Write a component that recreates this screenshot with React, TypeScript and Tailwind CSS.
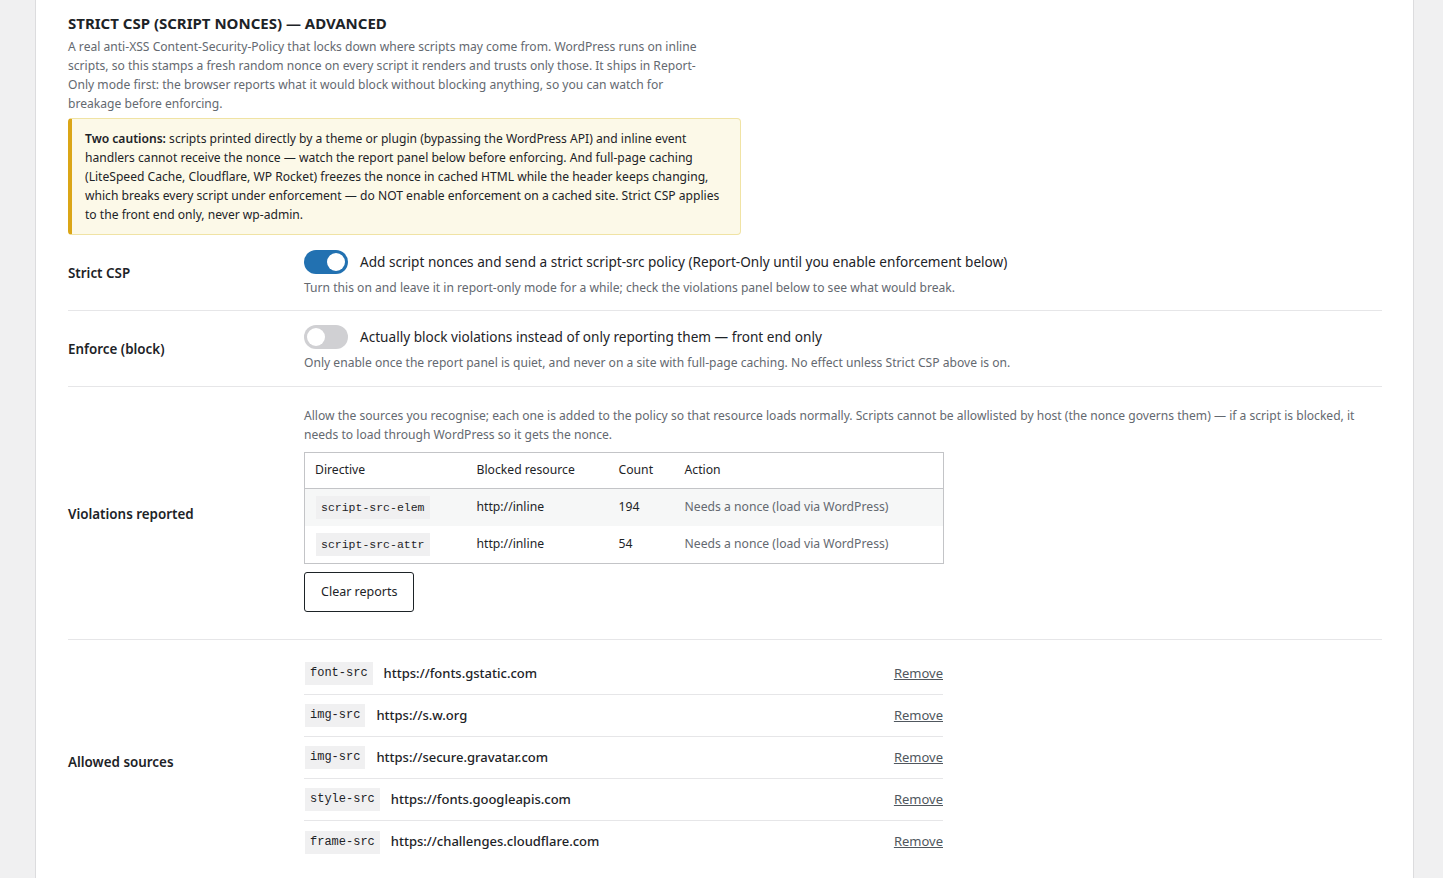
import React from "react";

const sans = "font-['Noto_Sans',sans-serif]";

function Toggle({ on }: { on: boolean }) {
  return (
    <span
      className={`relative inline-flex h-[24px] w-[44px] shrink-0 items-center rounded-full ${
        on ? "bg-[#2271b1]" : "bg-[#d0d0d3]"
      }`}
    >
      <span
        className={`absolute top-[3px] h-[18px] w-[18px] rounded-full bg-white ${
          on ? "left-[23px]" : "left-[3px]"
        }`}
      />
    </span>
  );
}

function Code({ children, size = "table" }: { children: React.ReactNode; size?: "table" | "list" }) {
  return (
    <code
      className={`inline-block bg-[#f0f0f1] px-[5px] font-['Liberation_Mono',monospace] text-[#1d2327] ${
        size === "table" ? "py-[2px] text-[11.5px] leading-[19px]" : "py-[2px] text-[12px] leading-[19px]"
      }`}
    >
      {children}
    </code>
  );
}

const sources: [string, string][] = [
  ["font-src", "https://fonts.gstatic.com"],
  ["img-src", "https://s.w.org"],
  ["img-src", "https://secure.gravatar.com"],
  ["style-src", "https://fonts.googleapis.com"],
  ["frame-src", "https://challenges.cloudflare.com"],
];

const label = "mt-[2px] w-[236px] shrink-0 text-[13.4px] font-semibold text-[#1d2327]";
const muted = "text-[12.1px] leading-[19px] text-[#646970]";

export default function App() {
  return (
    <div className={`min-h-screen bg-[#f0f0f1] pl-[35px] pr-[29px] ${sans}`}>
      <div className="min-h-[878px] border-x border-[#dcdcde] bg-white pl-[32px] pr-[31px] pt-[12px]">
        <h2 className="text-[15px] font-bold uppercase leading-[22px] text-[#1d2327]">
          Strict CSP (script nonces) — Advanced
        </h2>
        <p className={`mt-[3px] max-w-[636px] ${muted}`}>
          A real anti-XSS Content-Security-Policy that locks down where scripts may come from. WordPress runs on inline
          scripts, so this stamps a fresh random nonce on every script it renders and trusts only those. It ships in
          Report-Only mode first: the browser reports what it would block without blocking anything, so you can watch
          for breakage before enforcing.
        </p>
        <div className="mt-[5px] w-[673px] rounded-[4px] border border-[#f0e3a4] border-l-[4px] border-l-[#dba617] bg-[#fcf9e8] py-[10px] pl-[13px] pr-[12px] text-[12.1px] leading-[19px] text-[#1d2327]">
          <strong className="font-semibold">Two cautions:</strong> scripts printed directly by a theme or plugin
          (bypassing the WordPress API) and inline event handlers cannot receive the nonce — watch the report panel
          below before enforcing. And full-page caching (LiteSpeed Cache, Cloudflare, WP Rocket) freezes the nonce in
          cached HTML while the header keeps changing, which breaks every script under enforcement — do NOT enable
          enforcement on a cached site. Strict CSP applies to the front end only, never wp-admin.
        </div>

        {/* Strict CSP */}
        <div className="flex items-center border-b border-[#e6e6e8]">
          <div className={label}>Strict CSP</div>
          <div className="pt-[15px] pb-[13px]">
            <div className="flex items-center gap-[12px]">
              <Toggle on />
              <span className="text-[13.6px] leading-[24px] text-[#1d2327]">
                Add script nonces and send a strict script-src policy (Report-Only until you enable enforcement below)
              </span>
            </div>
            <p className={`mt-[4px] ${muted}`}>
              Turn this on and leave it in report-only mode for a while; check the violations panel below to see what
              would break.
            </p>
          </div>
        </div>

        {/* Enforce */}
        <div className="flex items-center border-b border-[#e6e6e8]">
          <div className={label}>Enforce (block)</div>
          <div className="pt-[14px] pb-[14px]">
            <div className="flex items-center gap-[12px]">
              <Toggle on={false} />
              <span className="text-[13.6px] leading-[24px] text-[#1d2327]">
                Actually block violations instead of only reporting them — front end only
              </span>
            </div>
            <p className={`mt-[4px] ${muted}`}>
              Only enable once the report panel is quiet, and never on a site with full-page caching. No effect unless
              Strict CSP above is on.
            </p>
          </div>
        </div>

        {/* Violations */}
        <div className="flex items-center border-b border-[#e6e6e8]">
          <div className={label}>Violations reported</div>
          <div className="flex-1 pt-[19px] pb-[27px]">
            <p className={muted}>
              Allow the sources you recognise; each one is added to the policy so that resource loads normally. Scripts
              cannot be allowlisted by host (the nonce governs them) — if a script is blocked, it needs to load through
              WordPress so it gets the nonce.
            </p>
            <table className="mt-[8px] w-[640px] border-collapse border border-[#c3c4c7] text-left text-[12.2px] text-[#1d2327]">
              <thead>
                <tr className="h-[36px] border-b border-[#c3c4c7]">
                  <th className="w-[162px] pl-[10px] font-normal">Directive</th>
                  <th className="w-[142px] pl-[10px] font-normal">Blocked resource</th>
                  <th className="w-[66px] pl-[10px] font-normal">Count</th>
                  <th className="pl-[10px] font-normal">Action</th>
                </tr>
              </thead>
              <tbody>
                <tr className="h-[37px] bg-[#f6f7f7]">
                  <td className="pl-[11px]">
                    <Code>script-src-elem</Code>
                  </td>
                  <td className="pl-[10px]">http://inline</td>
                  <td className="pl-[10px]">194</td>
                  <td className="pl-[10px] text-[#646970]">Needs a nonce (load via WordPress)</td>
                </tr>
                <tr className="h-[38px]">
                  <td className="pl-[11px]">
                    <Code>script-src-attr</Code>
                  </td>
                  <td className="pl-[10px]">http://inline</td>
                  <td className="pl-[10px]">54</td>
                  <td className="pl-[10px] text-[#646970]">Needs a nonce (load via WordPress)</td>
                </tr>
              </tbody>
            </table>
            <button className="mt-[8px] h-[40px] rounded-[3px] border border-[#1d2327] bg-white px-[16px] text-[12.5px] text-[#1d2327]">
              Clear reports
            </button>
          </div>
        </div>

        {/* Allowed sources */}
        <div className="flex items-center">
          <div className={label}>Allowed sources</div>
          <div className="w-[639px] pt-[13px] pb-[19px]">
            {sources.map(([d, u], i) => (
              <div
                key={i}
                className={`box-border flex h-[42px] items-center ${
                  i < sources.length - 1 ? "border-b border-[#e6e6e8]" : ""
                }`}
              >
                <span className="ml-px flex">
                  <Code size="list">{d}</Code>
                </span>
                <span className="ml-[11px] text-[13px] font-medium text-[#1d2327]">{u}</span>
                <a className="ml-auto text-[13px] text-[#50575e] underline">Remove</a>
              </div>
            ))}
          </div>
        </div>
      </div>
    </div>
  );
}
